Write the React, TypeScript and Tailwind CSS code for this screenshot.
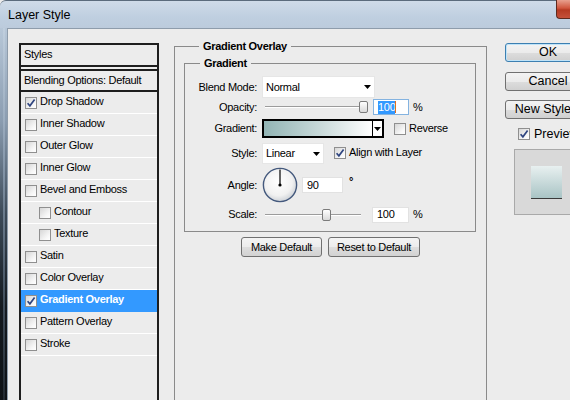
import React from "react";

type StyleItem = { label: string; checked?: boolean; active?: boolean; sub?: boolean };

const styleItems: StyleItem[] = [
  { label: "Drop Shadow", checked: true },
  { label: "Inner Shadow" },
  { label: "Outer Glow" },
  { label: "Inner Glow" },
  { label: "Bevel and Emboss" },
  { label: "Contour", sub: true },
  { label: "Texture", sub: true },
  { label: "Satin" },
  { label: "Color Overlay" },
  { label: "Gradient Overlay", checked: true, active: true },
  { label: "Pattern Overlay" },
  { label: "Stroke" },
];

function CheckBox({ checked = false }: { checked?: boolean }) {
  return (
    <span className="w-[12px] h-[12px] shrink-0 border border-[#8f8f8f] bg-[linear-gradient(135deg,#d6d6d6,#f7f7f7_70%,#ffffff)] flex items-center justify-center">
      {checked && (
        <svg width="10" height="10" viewBox="0 0 10 10">
          <path d="M1.6 5.2 L3.9 7.8 L8.6 1.6" fill="none" stroke="#2f4580" strokeWidth="1.7" />
        </svg>
      )}
    </span>
  );
}

function Arrow() {
  return (
    <svg width="7" height="4" viewBox="0 0 7 4" className="shrink-0">
      <path d="M0 0 H7 L3.5 4 Z" fill="#000" />
    </svg>
  );
}

function Slider({ pos }: { pos: number }) {
  return (
    <div className="relative w-[107px] h-[16px]">
      <div className="absolute left-[3px] right-[8px] top-[7px] h-[2px] border-t border-[#9c9c9c] bg-white" />
      <div
        className="absolute top-[2px] w-[9px] h-[12px] rounded-[2px] border border-[#7b7b7b] bg-[linear-gradient(#ffffff,#d9d9d9)]"
        style={{ left: pos }}
      />
    </div>
  );
}

function Field({ value, width, focused = false }: { value: string; width: string; focused?: boolean }) {
  return (
    <div
      className={`${width} h-[16px] bg-white border flex items-center pl-[4px] ${
        focused ? "border-[#84b3e0]" : "border-[#e2e2e2]"
      }`}
    >
      {focused ? (
        <>
          <span className="bg-[#3399ff] text-white leading-[13px]">{value}</span>
          <span className="w-[1px] h-[12px] bg-[#e07020]" />
        </>
      ) : (
        value
      )}
    </div>
  );
}

function Dial() {
  return (
    <svg width="36" height="36" viewBox="0 0 36 36" className="shrink-0">
      <defs>
        <radialGradient id="dialFill" cx="45%" cy="40%" r="60%">
          <stop offset="0%" stopColor="#ffffff" />
          <stop offset="70%" stopColor="#f1f1f1" />
          <stop offset="100%" stopColor="#cfd3d8" />
        </radialGradient>
      </defs>
      <circle cx="18" cy="18" r="16.6" fill="url(#dialFill)" stroke="#44597d" strokeWidth="1.4" />
      <line x1="18" y1="18" x2="18" y2="2.5" stroke="#000" strokeWidth="1.2" />
      <circle cx="18" cy="18" r="1.6" fill="#000" />
    </svg>
  );
}

function Row({ label, className = "", children }: { label: string; className?: string; children: React.ReactNode }) {
  return (
    <div className={`flex items-center ${className}`}>
      <span className="w-[73px] text-right pr-[1px] shrink-0">{label}</span>
      <div className="flex items-center ml-[4px]">{children}</div>
    </div>
  );
}

function DlgButton({ label, className = "" }: { label: string; className?: string }) {
  return (
    <div
      className={`h-[20px] rounded-[3px] border border-[#707070] bg-[linear-gradient(#f4f4f4,#ececec_50%,#dedede_51%,#d2d2d2)] flex items-center justify-center ${className}`}
    >
      {label}
    </div>
  );
}

function SideButton({ label, primary = false, className = "" }: { label: string; primary?: boolean; className?: string }) {
  return (
    <div
      className={`w-[86px] h-[19px] shrink-0 rounded-[3px] border bg-[linear-gradient(#f3f3f3,#ebebeb_50%,#dddddd_51%,#d0d0d0)] flex items-center justify-center text-[12.5px] tracking-normal ${
        primary ? "border-[#3c7fb1] shadow-[inset_0_0_0_1px_#bfe3f8]" : "border-[#707070]"
      } ${className}`}
    >
      {label}
    </div>
  );
}

export default function App() {
  return (
    <div className="w-[570px] h-[400px] overflow-hidden flex flex-col bg-[#ececec] text-[11px] tracking-[-0.3px] text-black font-['Liberation_Sans',Arial,sans-serif]">
      {/* Title bar */}
      <div className="h-[28px] shrink-0 flex justify-between rounded-tl-[6px] border-t border-[#5b6b7c] bg-[linear-gradient(#cfdbe8,#bfcfe0_60%,#bccbdc)]">
        <span className="pl-[8px] pt-[6px] text-[12.5px] leading-[16px] tracking-normal text-black">Layer Style</span>
        <div className="w-[14px] h-[19px] -mt-[1px] rounded-bl-[4px] border-l border-b border-[#5e2a1e] bg-[linear-gradient(#e8a08e,#d0563d_45%,#b53a22_55%,#c5513a)]" />
      </div>

      <div className="flex flex-1 min-h-0">
        {/* Window frame edge */}
        <div className="w-[7px] shrink-0 bg-[linear-gradient(#b7c7d8,#8a9cb0_25%,#3c4a58_50%,#141a20_75%,#0e1216)]">
          <div className="ml-[3px] w-[2px] h-full bg-[linear-gradient(#c4d2e0,#8fa1b5_40%,#5b6c7e_70%,#2a333c)] opacity-70" />
        </div>

        <div className="flex-1 flex pt-[10px] border-t border-l border-[#8e9cab] bg-[#ececec] overflow-hidden">
          {/* Styles list */}
          <div className="ml-[11px] mt-[4px] w-[140px] h-[400px] shrink-0 border-x-2 border-t-2 border-[#1e1e1e] flex flex-col">
            <div className="h-[22px] shrink-0 flex items-center pl-[3px] pb-[1px] border-b-2 border-[#1e1e1e]">Styles</div>
            <div className="h-[2px] shrink-0" />
            <div className="h-[23px] shrink-0 flex items-center pl-[3px] pb-[1px] border-y-2 border-[#1e1e1e]">
              Blending Options: Default
            </div>
            {styleItems.map((item) => (
              <div
                key={item.label}
                className={`h-[22px] shrink-0 flex items-center gap-[3px] border-b ${
                  item.sub ? "pl-[18px]" : "pl-[4px]"
                } ${item.active ? "bg-[#3399ff] text-white font-bold border-[#3399ff]" : "border-white"}`}
              >
                <CheckBox checked={item.checked} />
                <span className="pb-[2px]">{item.label}</span>
              </div>
            ))}
          </div>

          {/* Settings */}
          <fieldset className="ml-[15px] w-[313px] h-[380px] shrink-0 border border-[#8a8a8a] pl-[9px]">
            <legend className="ml-[15px] px-[4px] font-bold leading-[14px]">Gradient Overlay</legend>
            <fieldset className="mt-[3px] w-[292px] h-[176px] border border-[#8a8a8a]">
              <legend className="ml-[15px] px-[4px] font-bold leading-[14px]">Gradient</legend>

              <Row label="Blend Mode:" className="mt-[6px] h-[22px]">
                <div className="w-[113px] h-[22px] bg-white border border-[#e6e6e6] flex items-center justify-between pl-[3px] pr-[3px]">
                  Normal
                  <Arrow />
                </div>
              </Row>

              <Row label="Opacity:" className="h-[18px]">
                <Slider pos={97} />
                <div className="ml-[4px]">
                  <Field value="100" width="w-[36px]" focused />
                </div>
                <span className="ml-[4px]">%</span>
              </Row>

              <Row label="Gradient:" className="mt-[3px] h-[19px]">
                <div className="w-[122px] h-[19px] border-2 border-black flex">
                  <div className="flex-1 bg-[linear-gradient(90deg,#92b4b4,#c6d8d8_50%,#ffffff)]" />
                  <div className="w-[10px] border-l border-black bg-white flex items-center justify-center">
                    <Arrow />
                  </div>
                </div>
                <div className="ml-[10px] flex items-center gap-[3px]">
                  <CheckBox />
                  Reverse
                </div>
              </Row>

              <Row label="Style:" className="mt-[5px] h-[21px]">
                <div className="w-[62px] h-[21px] bg-white border border-[#e6e6e6] flex items-center justify-between pl-[3px] pr-[3px]">
                  Linear
                  <Arrow />
                </div>
                <div className="ml-[10px] flex items-center gap-[3px] -mt-[2px]">
                  <CheckBox checked />
                  Align with Layer
                </div>
              </Row>

              <Row label="Angle:" className="mt-[3px] h-[36px]">
                <Dial />
                <div className="ml-[4px]">
                  <Field value="90" width="w-[41px]" />
                </div>
                <span className="ml-[6px] -mt-[8px] text-[11px] font-bold">°</span>
              </Row>

              <Row label="Scale:" className="mt-[3px] h-[17px]">
                <Slider pos={60} />
                <div className="ml-[3px]">
                  <Field value="100" width="w-[37px]" />
                </div>
                <span className="ml-[4px]">%</span>
              </Row>
            </fieldset>

            <div className="mt-[5px] flex justify-center gap-[6px] pr-[9px]">
              <DlgButton label="Make Default" className="w-[81px]" />
              <DlgButton label="Reset to Default" className="w-[92px]" />
            </div>
          </fieldset>

          {/* Buttons and preview */}
          <div className="ml-[18px] mt-[4px] flex flex-col shrink-0">
            <SideButton label="OK" primary />
            <SideButton label="Cancel" className="mt-[10px]" />
            <SideButton label="New Style..." className="mt-[9px]" />
            <div className="mt-[8px] ml-[13px] flex items-center gap-[4px] text-[12.5px] leading-[14px] tracking-normal">
              <CheckBox checked />
              Preview
            </div>
            <div className="mt-[8px] ml-[9px] w-[70px] h-[66px] border border-[#a9a9a9] bg-[#d9d9d9] pl-[16px] pt-[16px]">
              <div className="w-[31px] h-[33px] border-b border-[#3a3a3a] bg-[linear-gradient(#e8f0f0,#a9c4c5)]" />
            </div>
          </div>
        </div>
      </div>
    </div>
  );
}
